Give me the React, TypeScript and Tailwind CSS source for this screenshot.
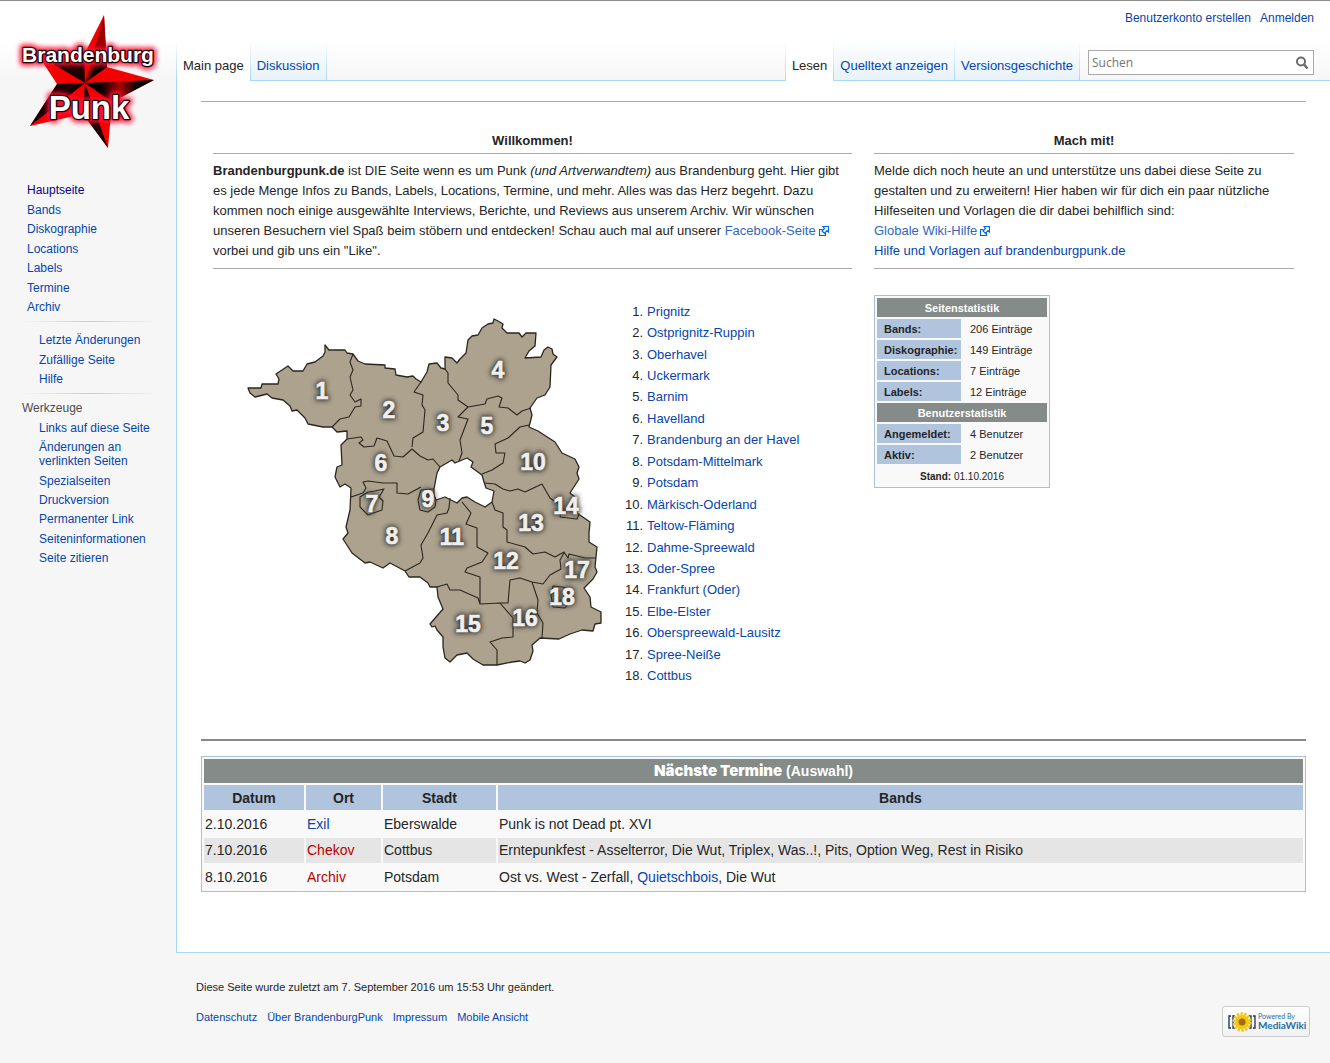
import React from 'react';

const link = 'text-[#0645ad] hover:underline';

const mainNav = ['Hauptseite', 'Bands', 'Diskographie', 'Locations', 'Labels', 'Termine', 'Archiv'];
const wikiNav = ['Letzte Änderungen', 'Zufällige Seite', 'Hilfe'];
const toolNav = [
  'Links auf diese Seite',
  'Änderungen an verlinkten Seiten',
  'Spezialseiten',
  'Druckversion',
  'Permanenter Link',
  'Seiteninformationen',
  'Seite zitieren',
];

const regions = [
  'Prignitz', 'Ostprignitz-Ruppin', 'Oberhavel', 'Uckermark', 'Barnim', 'Havelland',
  'Brandenburg an der Havel', 'Potsdam-Mittelmark', 'Potsdam', 'Märkisch-Oderland',
  'Teltow-Fläming', 'Dahme-Spreewald', 'Oder-Spree', 'Frankfurt (Oder)', 'Elbe-Elster',
  'Oberspreewald-Lausitz', 'Spree-Neiße', 'Cottbus',
];

const siteStats = [
  ['Bands:', '206 Einträge'],
  ['Diskographie:', '149 Einträge'],
  ['Locations:', '7 Einträge'],
  ['Labels:', '12 Einträge'],
];
const userStats = [
  ['Angemeldet:', '4 Benutzer'],
  ['Aktiv:', '2 Benutzer'],
];

const outline =
  'M248 388L261 388L262 384L278 384L279 379L276 374L288 366L293 371L303 371L307 364L315 362L323 356L325 352L325 345L329 350L345 350L347 353L353 354L358 361L365 364L385 365L385 368L395 369L396 375L407 377L413 376L416 379L421 382L427 372L429 364L437 363L441 368L445 369L445 357L452 358L457 363L460 359L466 353L468 340L472 336L478 335L482 328L488 324L493 323L494 319L498 321L503 324L502 328L507 333L519 333L522 337L526 333L536 333L535 346L529 351L525 358L541 357L544 350L548 347L552 349L553 354L557 357L551 365L550 387L545 395L537 398L530 408L532 415L529 427L538 431L555 442L562 453L575 459L579 467L577 473L579 479L570 493L575 497L577 513L590 522L589 533L589 542L597 547L596 557L595 567L597 572L593 579L584 588L590 597L591 607L601 612L601 623L595 624L593 631L582 630L570 634L559 639L540 638L532 645L533 651L530 660L525 663L520 661L512 662L497 665L483 665L473 659L467 653L457 655L450 662L445 658L443 647L443 637L437 630L435 626L432 627L430 624L443 609L438 597L437 587L430 587L428 583L420 577L409 577L405 571L390 563L383 568L370 562L365 563L352 553L343 539L348 533L346 527L350 510L351 488L345 484L340 487L335 477L337 467L342 465L341 445L347 439L347 431L337 432L332 427L323 427L308 424L305 418L297 410L292 411L290 406L283 400L272 398L267 394L255 397L250 393Z' +
  'M434 489L437 473L440 467L452 460L455 463L467 458L473 462L471 467L482 475L484 482L486 488L494 491L492 502L485 507L475 502L467 497L462 498L457 503L445 497L436 500L434 495Z';

const borders =
  'M353 354L350 362L353 370L350 377L353 390L350 395L355 402L361 399L361 406L355 407L349 417L340 419L332 427' +
  'M421 382L414 392L423 395L422 405L425 410L423 432L413 438L412 447' +
  'M347 439L361 437L363 440L359 443L364 447L374 446L377 438L387 441L394 456L403 457L412 449L420 456L428 460L433 459L440 467' +
  'M445 369L448 373L448 383L458 395L458 400L468 407L485 404L487 399L498 396L502 398L499 407L508 408L517 415L522 411L531 408' +
  'M468 407L458 417L468 419L460 440L462 453L459 461' +
  'M529 425L520 427L508 438L495 444L496 453L505 453L503 463L492 470L482 474' +
  'M485 483L495 484L503 489L510 491L518 489L525 492L542 484L550 498L557 503L562 502L560 517L577 519L579 514' +
  'M492 502L495 510L503 513L503 527L507 530L507 542L525 547L533 554L545 552L555 557L564 552L568 558L569 554L573 555L585 558L596 558' +
  'M564 553L560 560L561 569L550 575L543 584L532 582L520 578L510 580L508 603L500 603L480 604L480 577L465 572L467 568L482 562L488 553L477 547L477 528L466 524L471 513L462 502' +
  'M437 587L447 584L450 590L460 590L478 598L480 604' +
  'M500 603L513 618L513 637L502 638L490 642L497 650L497 665' +
  'M532 582L538 600L537 613L543 623L542 638' +
  'M553 586L562 587L573 590L572 600L565 608L553 607L551 595Z' +
  'M450 498L449 508L447 513L437 515L428 533L421 545L423 558L420 563L405 571' +
  'M436 500L435 507L428 512L420 510L418 500L421 490L434 489' +
  'M351 497L363 493L366 488L363 482L368 481L383 483L397 483L397 493L408 494L421 487' +
  'M360 497L360 507L368 515L382 510L383 501L379 497L384 489L375 491L368 492Z';

const labels: [number, number, string][] = [
  [322, 400, '1'], [389, 419, '2'], [443, 432, '3'], [498, 379, '4'], [487, 435, '5'],
  [381, 472, '6'], [372, 513, '7'], [392, 545, '8'], [428, 508, '9'], [533, 471, '10'],
  [452, 546, '11'], [506, 570, '12'], [531, 532, '13'], [566, 515, '14'], [468, 633, '15'],
  [525, 627, '16'], [577, 579, '17'], [562, 606, '18'],
];

function RegionMap() {
  return (
    <svg viewBox="240 310 370 365" className="w-[370px] h-[365px] shrink-0" role="img" aria-label="Karte von Brandenburg">
      <defs>
        <filter id="digit-shadow" x="-60%" y="-40%" width="220%" height="180%">
          <feGaussianBlur stdDeviation="2.5" />
        </filter>
      </defs>
      <path d={outline} fill="#aca28e" fillRule="evenodd" stroke="#2b261e" strokeWidth="1.3" strokeLinejoin="round" />
      <path d={borders} fill="none" stroke="#2b261e" strokeWidth="1.1" strokeLinejoin="round" />
      <g fontFamily="'Liberation Sans', sans-serif" fontWeight="700" fontSize="23" textAnchor="middle">
        <g filter="url(#digit-shadow)" fill="#333" stroke="#333" strokeWidth="3">
          {labels.map(([x, y, t]) => <text key={t} x={x} y={y - 1}>{t}</text>)}
        </g>
        <g fill="#f1efec" stroke="#f1efec" strokeWidth="0.6">
          {labels.map(([x, y, t]) => <text key={t} x={x} y={y - 1}>{t}</text>)}
        </g>
      </g>
    </svg>
  );
}

function Logo() {
  return (
    <svg viewBox="0 0 176 160" className="block w-44 h-40" role="img" aria-label="Brandenburg Punk">
      <defs>
        <filter id="glow" x="-20%" y="-40%" width="140%" height="180%">
          <feGaussianBlur stdDeviation="2.5" />
        </filter>
        <linearGradient id="arm-top" gradientUnits="userSpaceOnUse" x1="97" y1="55" x2="107" y2="60">
          <stop offset="0" stopColor="#900" />
          <stop offset="0.5" stopColor="#000" />
        </linearGradient>
        <linearGradient id="arm-right" gradientUnits="userSpaceOnUse" x1="100" y1="82" x2="150" y2="82">
          <stop offset="0" stopColor="#000" />
          <stop offset="0.4" stopColor="#a00" />
          <stop offset="0.75" stopColor="#000" />
        </linearGradient>
      </defs>
      <path d="M104 14L107 66L154 79L112 101L108 147L83 113L30 125L57 83L38 54L84 54Z" fill="#f40000" />
      <path d="M85 82L104 14L107 66Z" fill="url(#arm-top)" />
      <path d="M85 82L154 79L112 101Z" fill="url(#arm-right)" />
      <path d="M85 82L108 147L83 113ZM85 82L30 125L57 83ZM85 82L38 54L84 54Z" fill="#180000" />
      <g fontFamily="'Liberation Sans', sans-serif" fontWeight="700" textAnchor="middle">
        <g filter="url(#glow)" fill="#ff1030" stroke="#ff1030" strokeWidth="7" strokeLinejoin="round">
          <text x="88" y="61" fontSize="21">Brandenburg</text>
          <text x="89" y="118" fontSize="33">Punk</text>
        </g>
        <g fill="#fff" stroke="#200" strokeWidth="2.5" paintOrder="stroke" strokeLinejoin="round">
          <text x="88" y="61" fontSize="21">Brandenburg</text>
          <text x="89" y="118" fontSize="33">Punk</text>
        </g>
      </g>
    </svg>
  );
}

function ExternalIcon() {
  return (
    <svg viewBox="0 0 10 10" className="inline-block size-[10px] ml-[3px] align-[-1px]" aria-hidden="true">
      <path d="M3.500 3.500H.500v6h6V7" fill="#fff" stroke="#06c" strokeWidth="1.200" />
      <path d="M4 .500h5.500V6L8 4.700 5.500 7.500 3 5l2.500-2.500z" fill="#fff" stroke="#06f" strokeWidth="1.200" />
    </svg>
  );
}

function NavList({ items, className }: { items: string[]; className: string }) {
  return (
    <ul className={`flex flex-col justify-between leading-[14px] ${className}`}>
      {items.map((t) => (
        <li key={t}>
          <a href="#" className={t === 'Hauptseite' ? 'text-[#0b0080]' : link}>{t}</a>
        </li>
      ))}
    </ul>
  );
}

function Divider() {
  return <div className="ml-[22px] mr-[17px] h-px bg-linear-to-r from-transparent via-[#c8ccd1] to-transparent" />;
}

function Tab({ label, active = false }: { label: string; active?: boolean }) {
  return (
    <li className="flex">
      <a
        href="#"
        className={
          active
            ? '-mb-px flex items-end bg-white px-[6px] pb-[6px] leading-[18px] text-[#252525]'
            : '-mb-px flex items-end border-b border-[#a7d7f9] bg-linear-to-b from-white to-[#e8f2f8] px-[6px] pb-[5px] leading-[18px] text-[#0645ad]'
        }
      >
        {label}
      </a>
      <span className="w-px bg-linear-to-b from-white to-[#a7d7f9]" />
    </li>
  );
}

function StatRows({ title, rows }: { title: string; rows: string[][] }) {
  return (
    <>
      <tr>
        <th colSpan={2} className="bg-[#848b89] p-0 pt-[2px] text-white">{title}</th>
      </tr>
      {rows.map(([k, v]) => (
        <tr key={k}>
          <th scope="row" className="w-[84px] bg-[#b0c4de] p-0 pt-[2px] pl-[7px] text-left">{k}</th>
          <td className="p-0 pt-[2px] pl-[7px]">{v}</td>
        </tr>
      ))}
    </>
  );
}

export default function App() {
  return (
    <div className="min-h-screen border-t border-[#8f8b8b] bg-[#f6f6f6] bg-linear-to-b from-white from-50% to-[#f6f6f6] bg-[length:100%_80px] bg-no-repeat font-['Liberation_Sans',Arial,sans-serif] text-[13px] text-[#252525]">
      <div className="flex">
        <aside className="w-44 shrink-0 text-[12px]">
          <a href="#" className="block"><Logo /></a>
          <nav aria-label="Navigation" className="pt-[22px]">
            <NavList items={mainNav} className="h-[131px] pl-[27px]" />
            <div className="pt-[7px]"><Divider /></div>
            <NavList items={wikiNav} className="mt-[11px] h-[53px] pl-[39px]" />
            <div className="pt-[7px]"><Divider /></div>
            <h3 className="mt-[7px] pl-[22px] leading-[14px] text-[#4d4d4d]">Werkzeuge</h3>
            <NavList items={toolNav} className="mt-[6px] h-[144px] pr-[20px] pl-[39px]" />
          </nav>
        </aside>

        <div className="min-w-0 flex-1">
          <header className="flex h-[79px] flex-col justify-between">
            <div className="flex justify-end gap-[9px] pt-[9px] pr-4 text-[12px] leading-4">
              <a href="#" className={link}>Benutzerkonto erstellen</a>
              <a href="#" className={link}>Anmelden</a>
            </div>
            <div className="flex h-10 justify-between">
              <ul className="flex">
                <li className="w-px bg-linear-to-b from-white to-[#a7d7f9]" />
                <Tab label="Main page" active />
                <Tab label="Diskussion" />
              </ul>
              <div className="flex pr-4">
                <ul className="flex">
                  <li className="w-px bg-linear-to-b from-white to-[#a7d7f9]" />
                  <Tab label="Lesen" active />
                  <Tab label="Quelltext anzeigen" />
                  <Tab label="Versionsgeschichte" />
                </ul>
                <form className="mt-[10px] ml-2 flex h-[25px] w-[226px] items-center border border-[#aaa] bg-white pr-1" onSubmit={(e) => e.preventDefault()}>
                  <input
                    aria-label="Suchen"
                    placeholder="Suchen"
                    className="min-w-0 flex-1 bg-transparent pl-[3px] font-['Open_Sans',sans-serif] text-[12px] outline-none placeholder:text-[#757575]"
                  />
                  <button type="submit" aria-label="Suche starten">
                    <svg viewBox="0 0 14 14" className="size-[14px]" fill="none" stroke="#6b6b6b">
                      <circle cx="6" cy="5.500" r="4" strokeWidth="2" />
                      <path d="M9 8.500l3.500 4" strokeWidth="2.500" />
                    </svg>
                  </button>
                </form>
              </div>
            </div>
          </header>

          <main className="border-y border-l border-[#a7d7f9] bg-white px-6 pt-5 pb-[60px]">
            <hr className="border-[#aaa]" />
            <div className="mt-[29px] grid grid-cols-[639fr_420fr] gap-x-[22px] px-3 leading-5">
              <section className="border-b border-[#aaa] pb-[7px]">
                <h2 className="border-b border-[#aaa] pb-[2px] text-center font-bold">Willkommen!</h2>
                <p className="pt-[7px]">
                  <b>Brandenburgpunk.de</b> ist DIE Seite wenn es um Punk <i>(und Artverwandtem)</i> aus Brandenburg geht. Hier gibt es jede Menge Infos zu Bands, Labels, Locations, Termine, und mehr. Alles was das Herz begehrt. Dazu kommen noch einige ausgewählte Interviews, Berichte, und Reviews aus unserem Archiv. Wir wünschen unseren Besuchern viel Spaß beim stöbern und entdecken! Schau auch mal auf unserer{' '}
                  <a href="#" className="text-[#36b]">Facebook-Seite<ExternalIcon /></a> vorbei und gib uns ein "Like".
                </p>
              </section>
              <section className="border-b border-[#aaa] pb-[7px]">
                <h2 className="border-b border-[#aaa] pb-[2px] text-center font-bold">Mach mit!</h2>
                <p className="pt-[7px]">
                  Melde dich noch heute an und unterstütze uns dabei diese Seite zu gestalten und zu erweitern! Hier haben wir für dich ein paar nützliche Hilfeseiten und Vorlagen die dir dabei behilflich sind:
                  <br />
                  <a href="#" className="text-[#36b]">Globale Wiki-Hilfe<ExternalIcon /></a>
                  <br />
                  <a href="#" className={link}>Hilfe und Vorlagen auf brandenburgpunk.de</a>
                </p>
              </section>

              <div className="flex pt-8 pl-[27px]">
                <div className="pt-[9px]"><RegionMap /></div>
                <ol className="grid h-[386px] auto-rows-fr">
                  {regions.map((r, i) => (
                    <li key={r} className="flex items-center gap-1">
                      <span className="w-[33px] text-right">{i + 1}.</span>
                      <a href="#" className={link}>{r}</a>
                    </li>
                  ))}
                </ol>
              </div>
              <div className="pt-[26px]">
                <table className="w-44 border-separate border-spacing-[2px] border border-[#aac0d8] bg-[#f9f9f9] text-[11px] leading-[17px]">
                  <tbody>
                    <StatRows title="Seitenstatistik" rows={siteStats} />
                    <StatRows title="Benutzerstatistik" rows={userStats} />
                    <tr>
                      <td colSpan={2} className="p-0 pt-[2px] text-center text-[10px]"><b>Stand:</b> 01.10.2016</td>
                    </tr>
                  </tbody>
                </table>
              </div>
            </div>

            <hr className="mt-[52px] border-t-2 border-[#888]" />
            <table className="mt-[15px] w-full border-separate border-spacing-[2px] border border-[#aac0d0] bg-[#f9f9f9] text-[14px] leading-6">
              <thead>
                <tr>
                  <th colSpan={4} className="bg-[#848b89] p-0 text-white">
                    <span className="font-['Inter',sans-serif] text-[15px] leading-none font-black">Nächste Termine</span> (Auswahl)
                  </th>
                </tr>
                <tr className="bg-[#b0c4de] leading-[23px]">
                  <th className="w-[100px] p-0 pt-[2px]">Datum</th>
                  <th className="w-[75px] p-0 pt-[2px]">Ort</th>
                  <th className="w-[113px] p-0 pt-[2px]">Stadt</th>
                  <th className="p-0 pt-[2px]">Bands</th>
                </tr>
              </thead>
              <tbody>
                <tr>
                  <td className="px-px">2.10.2016</td>
                  <td className="px-px"><a href="#" className={link}>Exil</a></td>
                  <td className="px-px">Eberswalde</td>
                  <td className="px-px">Punk is not Dead pt. XVI</td>
                </tr>
                <tr className="bg-[#e5e5e5] leading-[25px]">
                  <td className="px-px">7.10.2016</td>
                  <td className="px-px"><a href="#" className="text-[#ba0000]">Chekov</a></td>
                  <td className="px-px">Cottbus</td>
                  <td className="px-px">Erntepunkfest - Asselterror, Die Wut, Triplex, Was..!, Pits, Option Weg, Rest in Risiko</td>
                </tr>
                <tr>
                  <td className="px-px">8.10.2016</td>
                  <td className="px-px"><a href="#" className="text-[#ba0000]">Archiv</a></td>
                  <td className="px-px">Potsdam</td>
                  <td className="px-px">Ost vs. West - Zerfall, <a href="#" className={link}>Quietschbois</a>, Die Wut</td>
                </tr>
              </tbody>
            </table>
          </main>

          <footer className="flex items-end justify-between pt-[26px] pr-5 pb-[26px] pl-5 text-[11px] leading-4">
            <div className="pb-3">
              <p>Diese Seite wurde zuletzt am 7. September 2016 um 15:53 Uhr geändert.</p>
              <ul className="mt-[14px] flex gap-[10px]">
                {['Datenschutz', 'Über BrandenburgPunk', 'Impressum', 'Mobile Ansicht'].map((t) => (
                  <li key={t}><a href="#" className={link}>{t}</a></li>
                ))}
              </ul>
            </div>
            <a href="#" className="flex h-[31px] w-[88px] items-center rounded-[3px] border border-[#ccc] bg-linear-to-b from-white to-[#f1f1f1] pl-1 text-[#1d6fa8]">
              <svg viewBox="0 0 30 22" className="h-[22px] w-[30px] shrink-0" aria-hidden="true">
                <path d="M4 5H2v12h2M8 5H6v12h2M26 5h2v12h-2M22 5h2v12h-2" fill="none" stroke="#1b2a6b" strokeWidth="1.300" />
                <circle cx="15" cy="11" r="7" fill="#f5c518" />
                <circle cx="15" cy="11" r="8" fill="none" stroke="#f2c811" strokeWidth="3.500" strokeDasharray="2.300 1.300" />
                <circle cx="15" cy="11" r="3.500" fill="#a8690c" />
              </svg>
              <span className="flex flex-col gap-px pl-px font-['Lato',sans-serif]">
                <span className="text-[7px] leading-[7px]">Powered By</span>
                <span className="text-[10px] leading-[9px] font-bold">MediaWiki</span>
              </span>
            </a>
          </footer>
        </div>
      </div>
    </div>
  );
}
